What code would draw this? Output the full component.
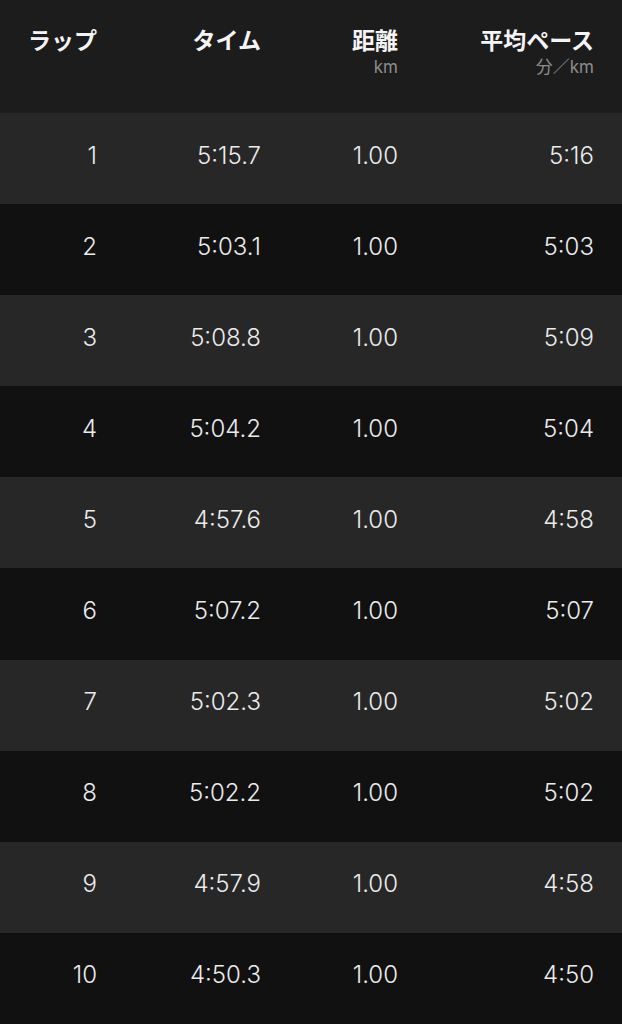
const laps = [
  ['1', '5:15.7', '1.00', '5:16'],
  ['2', '5:03.1', '1.00', '5:03'],
  ['3', '5:08.8', '1.00', '5:09'],
  ['4', '5:04.2', '1.00', '5:04'],
  ['5', '4:57.6', '1.00', '4:58'],
  ['6', '5:07.2', '1.00', '5:07'],
  ['7', '5:02.3', '1.00', '5:02'],
  ['8', '5:02.2', '1.00', '5:02'],
  ['9', '4:57.9', '1.00', '4:58'],
  ['10', '4:50.3', '1.00', '4:50'],
];

const cols = 'grid grid-cols-[97px_164px_137px_196px] pr-[28px] text-right';

export default function App() {
  return (
    <div className="w-[622px] h-[1024px] overflow-hidden bg-[#111111] font-['Inter','Noto_Sans_CJK_JP',sans-serif]">
      {/* header */}
      <div className={`${cols} h-[113px] bg-[#1c1c1c] pt-[27px] items-start`}>
        <div className="text-[23px] leading-[29px] font-bold text-[#f4f4f4]">ラップ</div>
        <div className="text-[23px] leading-[29px] font-bold text-[#f4f4f4]">タイム</div>
        <div>
          <div className="text-[23px] leading-[29px] font-bold text-[#f4f4f4]">距離</div>
          <div className="mt-[1px] text-[17px] leading-[20px] text-[#8d8d8d]">km</div>
        </div>
        <div>
          <div className="text-[23px] leading-[29px] font-bold text-[#f4f4f4]">平均ペース</div>
          <div className="mt-[1px] text-[17px] leading-[20px] text-[#8d8d8d]">分／km</div>
        </div>
      </div>

      {laps.map(([lap, time, dist, pace], i) => (
        <div
          key={lap}
          className={`${cols} h-[91.1px] items-center pb-[6px] text-[24px] font-[350] text-[#ececec] ${i % 2 === 0 ? 'bg-[#272727]' : 'bg-[#111111]'}`}
        >
          <div>{lap}</div>
          <div>{time}</div>
          <div>{dist}</div>
          <div>{pace}</div>
        </div>
      ))}
    </div>
  );
}
